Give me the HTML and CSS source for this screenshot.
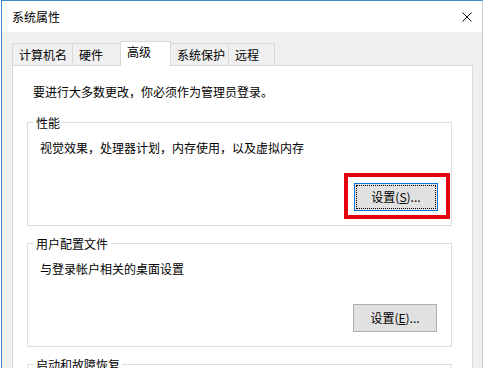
FILE: index.html
```html
<!DOCTYPE html>
<html lang="zh-CN">
<head>
  <meta charset="UTF-8" />
  <title>系统属性</title>
  <link rel="stylesheet" href="styles.css">
</head>
<body>
  <div class="window">
    <!-- Barra de título -->
    <div class="titlebar">
      <span class="title">系统属性</span>
      <svg class="close" width="10" height="10" viewBox="0 0 10 10">
        <path d="M0.5 0.5L9.5 9.5M9.5 0.5L0.5 9.5" stroke="#111" stroke-width="1" fill="none"/>
      </svg>
    </div>

    <div class="dialog">
      <!-- Pestañas -->
      <div class="tabs">
        <div class="tab t1">计算机名</div>
        <div class="tab t2">硬件</div>
        <div class="tab t3 active">高级</div>
        <div class="tab t4">系统保护</div>
        <div class="tab t5">远程</div>
      </div>

      <div class="panel">
        <p class="intro">要进行大多数更改，你必须作为管理员登录。</p>

        <fieldset class="group">
          <legend>性能</legend>
          <p class="desc">视觉效果，处理器计划，内存使用，以及虚拟内存</p>
          <div class="actions">
            <span class="mark">
              <button class="btn focus">设置(<u>S</u>)...</button>
            </span>
          </div>
        </fieldset>

        <fieldset class="group">
          <legend>用户配置文件</legend>
          <p class="desc">与登录帐户相关的桌面设置</p>
          <div class="actions">
            <button class="btn plain">设置(<u>E</u>)...</button>
          </div>
        </fieldset>

        <fieldset class="group last">
          <legend>启动和故障恢复</legend>
        </fieldset>
      </div>
    </div>
  </div>
</body>
</html>
```

FILE: styles.css
```css
/* ===== Base ===== */
* { box-sizing: border-box; margin: 0; padding: 0; }
html, body { width: 484px; height: 368px; overflow: hidden; background: #fff; }
body { font-family: "Noto Sans CJK SC", "Microsoft YaHei", sans-serif; font-size: 12px; color: #000; }

/* ===== Ventana ===== */
.window { margin-left: 1px; width: 482px; height: 400px; border-top: 1px solid #3f8ad0; border-left: 1px solid #3f8ad0; border-right: 1px solid #cfcfcf; background: #f0f0f0; }

.titlebar { height: 31px; background: #fff; display: flex; align-items: center; justify-content: space-between; padding: 0 10px 0 10px; }
.title { line-height: 16px; margin-top: 1px; }
.close { margin-top: 1px; }

/* ===== Pestañas ===== */
.dialog { padding-top: 9px; }
.tabs { display: flex; align-items: flex-end; padding-left: 10px; height: 24px; }
.tab { height: 22px; line-height: 20px; padding: 1px 0 0 6px; border: 1px solid #d9d9d9; border-bottom: none; margin-right: -1px; white-space: nowrap; background: #f0f0f0; }
.t1 { width: 61px; }
.t2 { width: 49px; }
.t3 { width: 51px; }
.t4 { width: 59px; }
.t5 { width: 47px; }
.tab.active { height: 25px; padding-top: 0; background: #fff; margin-bottom: -1px; position: relative; z-index: 1; }

/* ===== Panel ===== */
.panel { margin-left: 10px; width: 461px; height: 320px; background: #fff; border: 1px solid #d9d9d9; padding: 18px 20px 0 14px; }
.intro { line-height: 16px; margin-left: 6px; margin-bottom: 15px; white-space: nowrap; }

/* Grupos */
.group { width: 425px; border: 1px solid #dcdcdc; padding: 0 1px 14px 0; margin-bottom: 10px; min-width: 0; }
.group legend { margin-left: 6px; padding: 0 2px; line-height: 15px; }
.desc { line-height: 16px; margin: 10px 0 0 12px; white-space: nowrap; }
.actions { display: flex; justify-content: flex-end; margin-top: 27px; }
.group:first-of-type { padding-bottom: 6px; }
.group:first-of-type .actions { margin-top: 17px; }
.group.last { height: 120px; }

/* Marca roja */
.mark { display: block; border: 4px solid #e5000f; padding: 6px 8px 4px 6px; }

/* Botones */
.btn { width: 84px; height: 28px; font: inherit; line-height: 26px; color: #000; background: #e1e1e1; border: 1px solid #adadad; text-align: center; }
.btn u { text-decoration: underline; text-underline-offset: 1px; }
.btn.focus { border-color: #0078d7; outline: 1px dotted #000; outline-offset: -3px; }
.btn.plain { margin-right: 13px; }
```
